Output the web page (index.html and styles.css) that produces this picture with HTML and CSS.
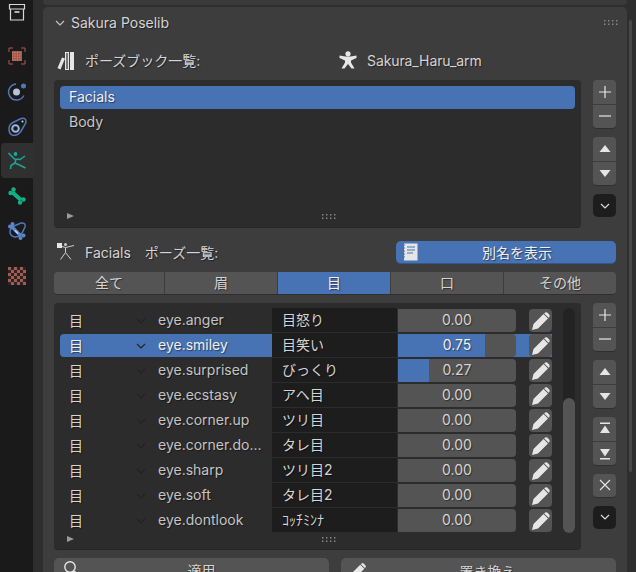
FILE: index.html
```html
<!DOCTYPE html>
<html lang="en">
<head>
    <meta charset="UTF-8">
    <title>Sakura Poselib</title>
    <link rel="stylesheet" href="styles.css">
</head>
<body>
    <svg class="sprites" width="0" height="0">
        <symbol id="pencil" viewBox="0 0 20 20">
            <path d="M1 19 L2.5 13 L12.5 3 L17 7.5 L7 17.5 Z M13.8 1.8 Q15 .8 16.2 1.6 L18.4 3.8 Q19.2 5 18.2 6.2 L17.6 6.8 L13.2 2.4 Z" fill="#e6e6e6"/>
        </symbol>
        <symbol id="dots" viewBox="0 0 14 5">
            <path d="M0 0h1.4v1.4H0zM4 0h1.4v1.4H4zM8 0h1.4v1.4H8zM12 0h1.4v1.4H12zM0 3.5h1.4v1.4H0zM4 3.5h1.4v1.4H4zM8 3.5h1.4v1.4H8zM12 3.5h1.4v1.4H12z" fill="#8a8a8a"/>
        </symbol>
        <symbol id="chev" viewBox="0 0 10 6">
            <path d="M1 1l4 4 4-4" fill="none" stroke="currentColor" stroke-width="1.1"/>
        </symbol>
    </svg>

    <nav class="sidebar">
        <div class="tab tab-first">
            <svg width="18" height="18" viewBox="0 0 18 18"><path d="M1.5 1.5h15v4.500h-15zM2.500 6v11h13V6" fill="none" stroke="#d8d8d8" stroke-width="1.2"/><path d="M6.500 9h5" stroke="#d8d8d8" stroke-width="1.6"/></svg>
        </div>
        <div class="tab tab-gap">
            <svg width="18" height="18" viewBox="0 0 18 18"><path d="M1 5V1h4M13 1h4v4M17 13v4h-4M5 17H1v-4" fill="none" stroke="#a85a4f" stroke-width="1"/><rect x="4" y="4" width="10" height="10" fill="#a85a4f"/><path d="M4 5.500h10M4 8h10M4 10.500h10M4 13h10" stroke="#c58c82" stroke-width="1" stroke-dasharray="1 1.500"/></svg>
        </div>
        <div class="tab">
            <svg width="20" height="20" viewBox="0 0 20 20"><path d="M16.800 14.500A8 8 0 1 1 9 3" fill="none" stroke="#4f78b8" stroke-width="1.5"/><circle cx="9.500" cy="11" r="3.500" fill="#b4c4dc"/><circle cx="16.500" cy="5" r="2.500" fill="#4f78b8"/></svg>
        </div>
        <div class="tab">
            <svg width="20" height="20" viewBox="0 0 20 20"><path d="M2 13 Q2 8.500 6 6.500 L14 2.500 Q19 1 19 6 Q18.500 8 17 10 L13.500 16 Q10.500 19.500 7 19.500 Q2 19 2 13Z" fill="none" stroke="#4f78b8" stroke-width="1.500"/><circle cx="8.500" cy="12.500" r="3.300" fill="none" stroke="#9db4dc" stroke-width="2"/><circle cx="15.500" cy="5.500" r="1" fill="#d8d8d8"/></svg>
        </div>
        <div class="tab tab-active">
            <svg width="20" height="20" viewBox="0 0 20 20"><circle cx="8.500" cy="3" r="1.900" fill="#1ba997"/><path d="M1.500 2L7.500 8L13 8.500L18 5M9 8L8 12L4 14.500L3.500 18M8 12L13.500 14.500L18.500 17" fill="none" stroke="#1ba997" stroke-width="1.500"/></svg>
        </div>
        <div class="tab">
            <svg width="20" height="20" viewBox="0 0 20 20"><path d="M5 6L14 14" stroke="#10b083" stroke-width="4" fill="none"/><circle cx="3.500" cy="7" r="2.200" fill="#10b083"/><circle cx="6.500" cy="3.500" r="2.200" fill="#10b083"/><circle cx="13" cy="16.500" r="2.200" fill="#10b083"/><circle cx="16.500" cy="13.500" r="2.200" fill="#10b083"/></svg>
        </div>
        <div class="tab">
            <svg width="20" height="20" viewBox="0 0 20 20"><path d="M3 11 Q3 7 7 5 L14 2 Q19 1.500 18 6 L15 12 Q12 16 8 16 Q3 15 3 11Z" fill="none" stroke="#4f78b8" stroke-width="1.500"/><path d="M4 5L14 15" stroke="#5c86c8" stroke-width="3.200"/><circle cx="3" cy="5.500" r="2" fill="#5c86c8"/><circle cx="5.500" cy="3" r="2" fill="#5c86c8"/><circle cx="13.500" cy="17" r="2" fill="#5c86c8"/><circle cx="16.500" cy="14.500" r="2" fill="#5c86c8"/><path d="M8 9.500L11 12.500" stroke="#d0d8e8" stroke-width="1.200"/></svg>
        </div>
        <div class="tab tab-gap2">
            <svg width="18" height="18" viewBox="0 0 18 18"><rect width="18" height="18" fill="#262626"/><path d="M0 0h3v3H0zM6 0h3v3H6zM12 0h3v3h-3zM3 3h3v3H3zM9 3h3v3H9zM15 3h3v3h-3zM0 6h3v3H0zM6 6h3v3H6zM12 6h3v3h-3zM3 9h3v3H3zM9 9h3v3H9zM15 9h3v3h-3zM0 12h3v3H0zM6 12h3v3H6zM12 12h3v3h-3zM3 15h3v3H3zM9 15h3v3H9zM15 15h3v3h-3z" fill="#a85a4f"/></svg>
        </div>
    </nav>

    <main class="area">
        <div class="top-strip"></div>
        <section class="panel">
            <header class="panel-head">
                <svg class="head-chev"><use href="#chev"/></svg>
                <span>Sakura Poselib</span>
                <svg class="head-dots"><use href="#dots"/></svg>
            </header>

            <div class="book-row">
                <div class="book-left">
                    <svg width="18" height="19" viewBox="0 0 18 19"><path d="M.5 17L5 6.500L8 7.500L3.500 18.500Z" fill="#e6e6e6"/><rect x="8.500" y="1.500" width="3" height="17" fill="#777" stroke="#e6e6e6"/><rect x="13" y="1" width="4" height="18" fill="#e6e6e6"/></svg>
                    <span>ポーズブック一覧:</span>
                </div>
                <div class="book-right">
                    <svg width="18" height="18" viewBox="0 0 18 18"><circle cx="9" cy="2.800" r="2.600" fill="#e6e6e6"/><path d="M.5 4.500L6.500 5.500H11.500L17.500 4.500L17.500 7L12 9.500V11.500L15.500 17.500H12.500L9 13L5.500 17.500H2.500L6 11.500V9.500L.5 7Z" fill="#e6e6e6"/></svg>
                    <span>Sakura_Haru_arm</span>
                </div>
            </div>

            <div class="list-wrap">
                <div class="list book-list">
                    <div class="book-item selected">Facials</div>
                    <div class="book-item">Body</div>
                    <div class="list-foot">
                        <span class="expand"></span>
                        <svg class="foot-dots"><use href="#dots"/></svg>
                    </div>
                </div>
                <div class="side-btns">
                    <div class="btn-group">
                        <div class="side-btn"><svg width="14" height="14" viewBox="0 0 14 14"><path d="M7 1v12M1 7h12" stroke="#e6e6e6" stroke-width="1.2"/></svg></div>
                        <div class="side-btn"><svg width="14" height="14" viewBox="0 0 14 14"><path d="M1 7h12" stroke="#e6e6e6" stroke-width="1.2"/></svg></div>
                    </div>
                    <div class="btn-group">
                        <div class="side-btn"><svg width="12" height="8" viewBox="0 0 12 8"><path d="M6 0l5.500 7H.5z" fill="#e6e6e6"/></svg></div>
                        <div class="side-btn"><svg width="12" height="8" viewBox="0 0 12 8"><path d="M6 8L.5 1h11z" fill="#e6e6e6"/></svg></div>
                    </div>
                    <div class="side-btn dark-btn"><svg class="btn-chev"><use href="#chev"/></svg></div>
                </div>
            </div>

            <div class="pose-row">
                <div class="pose-title">
                    <svg width="18" height="18" viewBox="0 0 18 18"><rect x="0" y="0" width="5" height="5" fill="#e6e6e6"/><circle cx="8.500" cy="1.500" r="1.500" fill="#cfcfcf"/><path d="M5 3.500L8.500 4.500L17 2.500M8.500 4.500V9.500L3.500 16.500M8.500 9.500L14 16.500" fill="none" stroke="#cfcfcf" stroke-width="1"/></svg>
                    <span class="pose-name">Facials</span>
                    <span>ポーズ一覧:</span>
                </div>
                <div class="alias-btn">
                    <svg width="16" height="18" viewBox="0 0 16 18"><path d="M2 .5H15.500V17.500H2Z" fill="#e6e6e6"/><path d="M0 2h3M0 5h3M0 8h3M0 11h3M0 14h3M5 4h8M5 7h8M5 10h6" stroke="#4772b3" stroke-width="1"/></svg>
                    <span>別名を表示</span>
                </div>
            </div>

            <div class="tabs">
                <div class="cat">全て</div>
                <div class="cat">眉</div>
                <div class="cat cat-on">目</div>
                <div class="cat">口</div>
                <div class="cat">その他</div>
            </div>

            <div class="list-wrap pose-wrap">
                <div class="list pose-list">
                    <div class="pose-body">
                        <div class="rows" id="rows"></div>
                        <div class="scrollbar"><div class="thumb"></div></div>
                    </div>
                    <div class="list-foot pose-foot">
                        <span class="expand"></span>
                        <svg class="foot-dots"><use href="#dots"/></svg>
                    </div>
                </div>
                <div class="side-btns">
                    <div class="btn-group">
                        <div class="side-btn"><svg width="14" height="14" viewBox="0 0 14 14"><path d="M7 1v12M1 7h12" stroke="#e6e6e6" stroke-width="1.2"/></svg></div>
                        <div class="side-btn"><svg width="14" height="14" viewBox="0 0 14 14"><path d="M1 7h12" stroke="#e6e6e6" stroke-width="1.2"/></svg></div>
                    </div>
                    <div class="btn-group">
                        <div class="side-btn"><svg width="12" height="8" viewBox="0 0 12 8"><path d="M6 0l5.500 7H.5z" fill="#e6e6e6"/></svg></div>
                        <div class="side-btn"><svg width="12" height="8" viewBox="0 0 12 8"><path d="M6 8L.5 1h11z" fill="#e6e6e6"/></svg></div>
                    </div>
                    <div class="btn-group">
                        <div class="side-btn"><svg width="12" height="13" viewBox="0 0 12 13"><path d="M1 .5h10v1.500H1zM6 3.500l5 7.500H1z" fill="#e6e6e6"/></svg></div>
                        <div class="side-btn"><svg width="12" height="13" viewBox="0 0 12 13"><path d="M6 9.500L1 2h10zM1 11h10v1.500H1z" fill="#e6e6e6"/></svg></div>
                    </div>
                    <div class="side-btn single"><svg width="12" height="12" viewBox="0 0 12 12"><path d="M1 1l10 10M11 1L1 11" stroke="#e6e6e6" stroke-width="1.100"/></svg></div>
                    <div class="side-btn dark-btn"><svg class="btn-chev"><use href="#chev"/></svg></div>
                </div>
            </div>

            <div class="action-row">
                <div class="action action-search">
                    <svg class="action-icon" width="16" height="16" viewBox="0 0 16 16"><circle cx="6" cy="6" r="5.200" fill="none" stroke="#e6e6e6" stroke-width="1.400"/><path d="M10 10l5 5" stroke="#e6e6e6" stroke-width="1.600"/></svg>
                    <span>適用</span>
                </div>
                <div class="action">
                    <svg class="action-icon" width="18" height="18"><use href="#pencil"/></svg>
                    <span>置き換え</span>
                </div>
            </div>
        </section>
    </main>

    <div class="region-scroll"></div>

    <script>
        const poses = [
            ['eye.anger', '目怒り', 0],
            ['eye.smiley', '目笑い', 0.75],
            ['eye.surprised', 'びっくり', 0.27],
            ['eye.ecstasy', 'アヘ目', 0],
            ['eye.corner.up', 'ツリ目', 0],
            ['eye.corner.do...', 'タレ目', 0],
            ['eye.sharp', 'ツリ目2', 0],
            ['eye.soft', 'タレ目2', 0],
            ['eye.dontlook', 'ｺｯﾁﾐﾝﾅ', 0]
        ];

        const rows = document.getElementById('rows');
        poses.forEach(function(pose) {
            const row = document.createElement('div');
            row.className = pose[0] === 'eye.smiley' ? 'row selected' : 'row';
            const fill = pose[2] > 0 ? '<div class="fill" style="width:' + (pose[2] * 100 - 1) + '%"></div>' : '';
            row.innerHTML =
                '<span class="kind">目</span>' +
                '<svg class="row-chev"><use href="#chev"/></svg>' +
                '<span class="name">' + pose[0] + '</span>' +
                '<span class="alias">' + pose[1] + '</span>' +
                '<div class="slider">' + fill + '<span>' + pose[2].toFixed(2) + '</span></div>' +
                '<div class="edit"><svg width="20" height="20"><use href="#pencil"/></svg></div>';
            rows.appendChild(row);
        });
    </script>
</body>
</html>
```

FILE: styles.css
```css
* {
    margin: 0;
    padding: 0;
    box-sizing: border-box;
}

html, body {
    height: 572px;
    overflow: hidden;
}

body {
    display: flex;
    background: #2e2e2e;
    color: #d4d4d4;
    font-family: Inter, 'Noto Sans CJK JP', sans-serif;
    font-size: 14px;
    text-shadow: 1px 1px 1px rgba(0,0,0,0.45);
}

.sprites {
    position: absolute;
}

/* left tab column */
.sidebar {
    width: 33px;
    background: #1a1a1a;
    display: flex;
    flex-direction: column;
}

.tab {
    height: 35px;
    display: flex;
    align-items: center;
    justify-content: center;
    flex: none;
}

.tab-first {
    height: 24px;
    align-items: flex-start;
    margin-bottom: 14px;
}

.tab-first svg {
    margin-top: 3px;
}

.tab-active {
    background: #303030;
    border-radius: 4px 0 0 4px;
    margin-left: 1px;
}

.tab-gap2 {
    margin-top: 10px;
}

/* main column */
.area {
    width: 584px;
    margin-left: 10px;
    flex: none;
}

.top-strip {
    height: 5px;
    background: #3a3a3a;
    border-radius: 0 0 4px 4px;
    margin-bottom: 2px;
}

.panel {
    background: #3d3d3d;
    border-radius: 5px 5px 0 0;
    height: 570px;
    padding: 0 11px;
}

.panel-head {
    height: 31px;
    display: flex;
    align-items: center;
    padding-left: 1px;
}

.head-chev {
    width: 10px;
    height: 6px;
    margin-right: 6px;
    color: #c8c8c8;
}

.head-dots {
    width: 14px;
    height: 5px;
    margin-left: auto;
    margin-right: -2px;
}

.book-row {
    height: 42px;
    display: flex;
    align-items: center;
    padding-top: 2px;
}

.book-left {
    width: 285px;
    display: flex;
    align-items: center;
    gap: 10px;
    padding-left: 3px;
}

.book-right {
    display: flex;
    align-items: center;
    gap: 10px;
    letter-spacing: -0.1px;
}

.list-wrap {
    display: flex;
    justify-content: space-between;
}

.list {
    width: 527px;
    background: #2c2c2c;
    border-radius: 4px;
    border-bottom: 1px solid #262626;
}

.book-list {
    height: 148px;
    padding: 6px 6px 0;
    position: relative;
}

.book-item {
    height: 23px;
    line-height: 22px;
    padding-left: 9px;
    margin-bottom: 2px;
    border-radius: 4px;
    color: #c8c8c8;
}

.book-item.selected {
    background: #4772b3;
    color: #f0f0f0;
}

.list-foot {
    display: flex;
    align-items: center;
    position: absolute;
    left: 13px;
    bottom: 8px;
}

.expand {
    width: 0;
    height: 0;
    border-left: 7px solid #9a9a9a;
    border-top: 3.500px solid transparent;
    border-bottom: 3.500px solid transparent;
}

.foot-dots {
    width: 14px;
    height: 5px;
    margin-left: 248px;
}

.side-btns {
    width: 23px;
    display: flex;
    flex-direction: column;
    gap: 8px;
}

.btn-group {
    display: flex;
    flex-direction: column;
    gap: 1px;
    border-bottom: 1px solid #2f2f2f;
    border-radius: 0 0 4px 4px;
}

.side-btn {
    height: 23.500px;
    background: #545454;
    display: flex;
    align-items: center;
    justify-content: center;
}

.btn-group .side-btn:first-child {
    border-radius: 4px 4px 0 0;
}

.btn-group .side-btn:last-child {
    border-radius: 0 0 4px 4px;
}

.single {
    border-radius: 4px;
    border-bottom: 1px solid #2f2f2f;
}

.dark-btn {
    background: #1d1d1d;
    border-radius: 5px;
    height: 23px;
}

.btn-chev {
    width: 10px;
    height: 6px;
    color: #e0e0e0;
}

/* pose list heading */
.pose-row {
    height: 44px;
    display: flex;
    align-items: center;
    justify-content: space-between;
    padding-top: 4px;
}

.pose-title {
    display: flex;
    align-items: center;
    padding-left: 3px;
}

.pose-title svg {
    margin-right: 10px;
}

.pose-name {
    margin-right: 14px;
}

.alias-btn {
    width: 220px;
    height: 23px;
    background: #4772b3;
    border-radius: 5px;
    border-bottom: 1px solid #35568a;
    display: flex;
    align-items: center;
    padding-left: 6px;
    color: #f0f0f0;
}

.alias-btn span {
    flex: 1;
    text-align: center;
}

.tabs {
    display: grid;
    grid-template-columns: 110px 112px 112px 112px 1fr;
    gap: 1px;
    height: 23px;
    margin-bottom: 8px;
    border-radius: 4px;
    overflow: hidden;
    border-bottom: 1px solid #2f2f2f;
}

.cat {
    background: #545454;
    text-align: center;
    line-height: 22px;
}

.cat-on {
    background: #4772b3;
    color: #f0f0f0;
}

/* pose list */
.pose-wrap {
    margin-bottom: 8px;
}

.pose-list {
    height: 247px;
    padding: 6px 6px 0;
    position: relative;
}

.pose-body {
    display: flex;
}

.rows {
    width: 492px;
}

.row {
    display: flex;
    align-items: center;
    height: 23px;
    margin-bottom: 2px;
    border-radius: 4px 0 0 4px;
}

.row.selected {
    background: #4772b3;
    color: #f0f0f0;
}

.kind {
    width: 75px;
    padding: 0 0 2px 9px;
    flex: none;
}

.row-chev {
    width: 10px;
    height: 6px;
    color: #222;
    flex: none;
    margin-left: 1px;
    margin-right: 12px;
}

.name {
    width: 114px;
    padding-bottom: 2px;
    flex: none;
    color: #c4c4c4;
}

.selected .name {
    color: #f0f0f0;
}

.alias {
    width: 126px;
    height: 24px;
    margin-top: -1px;
    background: #1d1d1d;
    border-right: 1px solid #2c2c2c;
    line-height: 24px;
    padding-left: 10px;
    flex: none;
    overflow: hidden;
    white-space: nowrap;
    color: #d4d4d4;
}

.slider {
    width: 118px;
    height: 23px;
    background: #545454;
    border-radius: 0 4px 4px 0;
    position: relative;
    text-align: center;
    line-height: 22px;
    flex: none;
    overflow: hidden;
}

.slider span {
    position: relative;
}

.fill {
    position: absolute;
    left: 0;
    top: 0;
    bottom: 0;
    background: #4772b3;
}

.edit {
    width: 23px;
    height: 23px;
    background: #545454;
    border-radius: 4px;
    margin-left: 13px;
    display: flex;
    align-items: center;
    justify-content: center;
    flex: none;
}

.scrollbar {
    width: 12px;
    height: 225px;
    margin-top: -1px;
    margin-left: 11px;
    background: #232323;
    border-radius: 6px;
    display: flex;
    align-items: flex-end;
}

.thumb {
    width: 100%;
    height: 135px;
    background: #545454;
    border-radius: 6px;
}

.pose-foot {
    bottom: 7px;
}

/* bottom buttons */
.action-row {
    display: grid;
    grid-template-columns: 275px 275px;
    justify-content: space-between;
}

.action {
    height: 24px;
    background: #545454;
    border-radius: 5px;
    display: flex;
    align-items: flex-start;
    padding: 4px 8px 0;
}

.action-search {
    padding: 3px 10px 0;
}

.action-search span {
    padding-left: 4px;
}

.action span {
    flex: 1;
    text-align: center;
    line-height: 20px;
}

.action-icon {
    flex: none;
}

.region-scroll {
    width: 3px;
    height: 452px;
    margin: 20px 0 0 2px;
    background: #484848;
    border-radius: 2px;
    flex: none;
}
```
